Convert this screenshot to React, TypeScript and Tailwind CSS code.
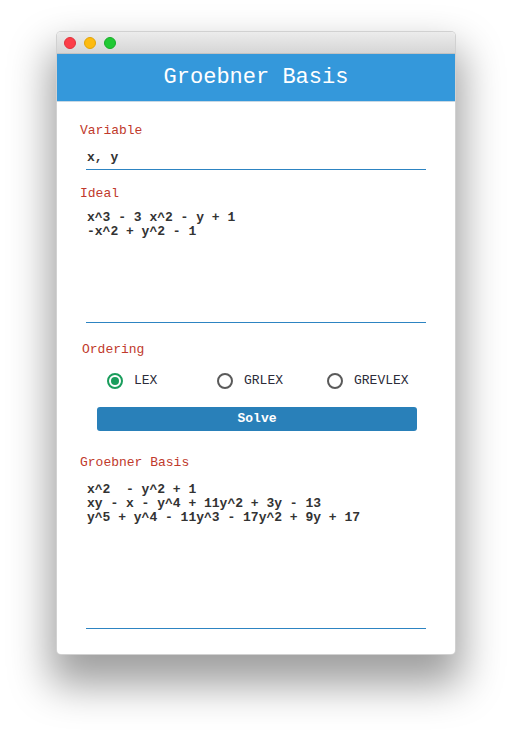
import React from "react";

const mono = { fontFamily: '"Liberation Mono", "Courier New", monospace' };

function Radio({ label, checked }: { label: string; checked?: boolean }) {
  return (
    <div className="flex items-center">
      <div
        className={`w-[16px] h-[16px] rounded-full border-2 flex items-center justify-center ${
          checked ? "border-[#1a9d5c]" : "border-[#5a5a5a]"
        }`}
      >
        {checked && <div className="w-[8px] h-[8px] rounded-full bg-[#1a9d5c]" />}
      </div>
      <span className="ml-[11px] text-[13px] leading-[16px] text-[#2c2c3a]">{label}</span>
    </div>
  );
}

export default function App() {
  return (
    <div className="w-[512px] h-[734px] bg-white pt-[31px] pl-[56px]" style={mono}>
      <div className="w-[400px] rounded-[5px] bg-white border border-[rgba(0,0,0,0.18)] shadow-[0_24px_40px_6px_rgba(0,0,0,0.38)] overflow-hidden">
        <div className="h-[22px] bg-gradient-to-b from-[#ececec] to-[#d6d6d6] border-b border-[#c2c2c2] flex items-center pl-[7px] gap-[8px]">
          <div className="w-[12px] h-[12px] rounded-full bg-[#fc3d48] border border-[#e0323c]" />
          <div className="w-[12px] h-[12px] rounded-full bg-[#fdbb10] border border-[#e2a408]" />
          <div className="w-[12px] h-[12px] rounded-full bg-[#20c934] border border-[#17ad28]" />
        </div>
        <div className="h-[48px] bg-[#3498db] flex items-center justify-center border-b border-[#c8d8e4]">
          <span className="text-white text-[22px] leading-[26px]">Groebner Basis</span>
        </div>
        <div className="px-[23px] pb-[25px]">
          <div className="mt-[21px] text-[13px] leading-[16px] text-[#c0392b]">Variable</div>
          <div className="mx-[6px] mt-[11px] border-b border-[#2d84c2] pb-[3px] pl-[1px] text-[13px] leading-[16px] font-bold text-[#333]">
            x, y
          </div>
          <div className="mt-[16px] text-[13px] leading-[16px] text-[#c0392b]">Ideal</div>
          <div className="mx-[6px] mt-[9px] h-[112px] border-b border-[#2d84c2] pl-[1px] text-[13px] leading-[14px] font-bold text-[#333] whitespace-pre">
            {"x^3 - 3 x^2 - y + 1\n-x^2 + y^2 - 1"}
          </div>
          <div className="mt-[19px] ml-[2px] text-[13px] leading-[16px] text-[#c0392b]">Ordering</div>
          <div className="mt-[15px] ml-[27px] grid grid-cols-[110px_110px_110px]">
            <Radio label="LEX" checked />
            <Radio label="GRLEX" />
            <Radio label="GREVLEX" />
          </div>
          <button className="mt-[18px] ml-[17px] w-[320px] h-[24px] rounded-[3px] bg-[#2980b9] text-white text-[13px] font-bold flex items-center justify-center">
            Solve
          </button>
          <div className="mt-[24px] text-[13px] leading-[16px] text-[#c0392b]">Groebner Basis</div>
          <div className="mx-[6px] mt-[12px] h-[146px] border-b border-[#2d84c2] pl-[1px] text-[13px] leading-[14px] font-bold text-[#333] whitespace-pre">
            {"x^2  - y^2 + 1\nxy - x - y^4 + 11y^2 + 3y - 13\ny^5 + y^4 - 11y^3 - 17y^2 + 9y + 17"}
          </div>
        </div>
      </div>
    </div>
  );
}
